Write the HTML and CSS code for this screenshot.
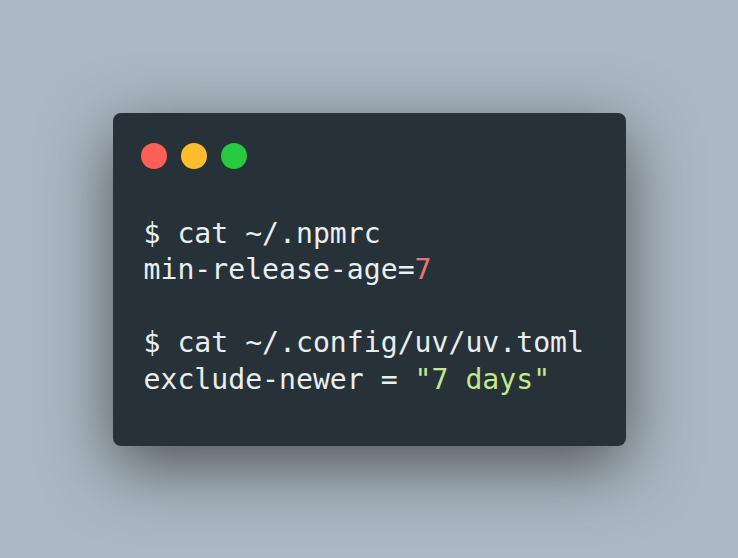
FILE: index.html
```html
<!DOCTYPE html>
<html>
<head>
<meta charset="utf-8">
<link rel="stylesheet" href="styles.css">
</head>
<body>
<div class="stage">
  <div class="window">
    <div class="controls">
      <span class="dot red"></span>
      <span class="dot yellow"></span>
      <span class="dot green"></span>
    </div>
    <pre class="code"><span class="line">$ cat ~/.npmrc</span>
<span class="line">min-release-age=<span class="num">7</span></span>
<span class="line"> </span>
<span class="line">$ cat ~/.config/uv/uv.toml</span>
<span class="line">exclude-newer = <span class="str">"7 days"</span></span></pre>
  </div>
</div>
</body>
</html>
```

FILE: styles.css
```css
html, body {
  margin: 0;
  padding: 0;
  width: 738px;
  height: 558px;
  background: #abb8c3;
  overflow: hidden;
}

.stage {
  width: 738px;
  height: 558px;
  display: flex;
  align-items: center;
  justify-content: center;
}

.window {
  width: 513px;
  height: 333px;
  box-sizing: border-box;
  background: #263238;
  border-radius: 8px;
  box-shadow: 0 20px 68px rgba(0, 0, 0, 0.55);
  padding: 30px 28px 0 28px;
}

.controls {
  display: flex;
  gap: 14px;
  height: 26px;
}

.dot {
  width: 26px;
  height: 26px;
  border-radius: 50%;
  display: block;
}
.red { background: #ff5f56; }
.yellow { background: #ffbd2e; }
.green { background: #27c93f; }

.code {
  margin: 47px 0 0 3px;
  font-family: "DejaVu Sans Mono", monospace;
  font-size: 28.15px;
  line-height: 36.6px;
  color: #e9eef0;
  white-space: pre;
}

.num { color: #f07178; }
.str { color: #c3e88d; }
```
